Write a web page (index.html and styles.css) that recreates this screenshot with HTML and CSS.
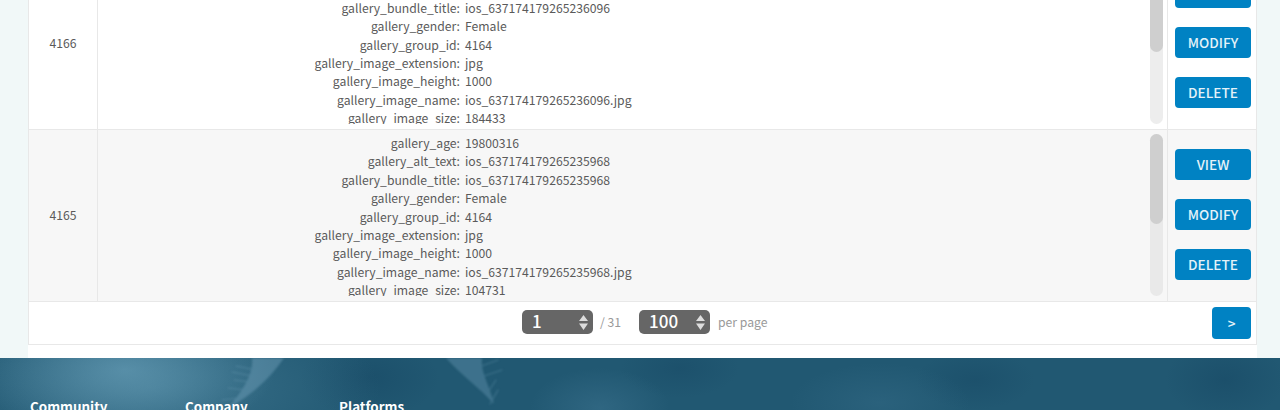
FILE: index.html
```html
<!DOCTYPE html>
<html lang="en">
<head>
  <meta charset="UTF-8" />
  <title>Gallery items</title>
  <link rel="stylesheet" href="styles.css">
</head>
<body>
  <main class="page">
    <div class="card">
      <div class="row">
        <div class="cell-id">4166</div>
        <div class="cell-data">
          <div class="scroller">
            <dl class="fields">
              <dt>gallery_age:</dt><dd>19800316</dd>
              <dt>gallery_alt_text:</dt><dd>ios_637174179265236096</dd>
              <dt>gallery_bundle_title:</dt><dd>ios_637174179265236096</dd>
              <dt>gallery_gender:</dt><dd>Female</dd>
              <dt>gallery_group_id:</dt><dd>4164</dd>
              <dt>gallery_image_extension:</dt><dd>jpg</dd>
              <dt>gallery_image_height:</dt><dd>1000</dd>
              <dt>gallery_image_name:</dt><dd>ios_637174179265236096.jpg</dd>
              <dt>gallery_image_size:</dt><dd>184433</dd>
            </dl>
          </div>
          <div class="track"><div class="thumb"></div></div>
        </div>
        <div class="cell-actions">
          <a class="btn">VIEW</a>
          <a class="btn">MODIFY</a>
          <a class="btn">DELETE</a>
        </div>
      </div>

      <div class="row row-alt">
        <div class="cell-id">4165</div>
        <div class="cell-data">
          <div class="scroller">
            <dl class="fields">
              <dt>gallery_age:</dt><dd>19800316</dd>
              <dt>gallery_alt_text:</dt><dd>ios_637174179265235968</dd>
              <dt>gallery_bundle_title:</dt><dd>ios_637174179265235968</dd>
              <dt>gallery_gender:</dt><dd>Female</dd>
              <dt>gallery_group_id:</dt><dd>4164</dd>
              <dt>gallery_image_extension:</dt><dd>jpg</dd>
              <dt>gallery_image_height:</dt><dd>1000</dd>
              <dt>gallery_image_name:</dt><dd>ios_637174179265235968.jpg</dd>
              <dt>gallery_image_size:</dt><dd>104731</dd>
            </dl>
          </div>
          <div class="track"><div class="thumb"></div></div>
        </div>
        <div class="cell-actions">
          <a class="btn">VIEW</a>
          <a class="btn">MODIFY</a>
          <a class="btn">DELETE</a>
        </div>
      </div>

      <div class="pager">
        <div class="pager-center">
          <div class="stepper">
            <span>1</span>
            <svg class="stepper-arrows" width="9" height="15" viewBox="0 0 9 15"><path d="M4.500 0 9 6H0zM4.500 15 0 8.500H9z" fill="#ddd"/></svg>
          </div>
          <span class="pager-note note-total">/ 31</span>
          <div class="stepper">
            <span>100</span>
            <svg class="stepper-arrows" width="9" height="15" viewBox="0 0 9 15"><path d="M4.500 0 9 6H0zM4.500 15 0 8.500H9z" fill="#ddd"/></svg>
          </div>
          <span class="pager-note">per page</span>
        </div>
        <a class="btn btn-next">&gt;</a>
      </div>
    </div>
  </main>

  <footer class="footer">
    <svg class="feathers" width="1280" height="52" viewBox="0 0 1280 52" fill="none">
      <g fill="#6a9ab3" stroke="#6a9ab3" stroke-linecap="round" opacity="0.5">
        <path d="M252 0H284C274 14 258 34 228 50 242 34 254 16 252 0z" stroke="none"/>
        <path d="M256 12 236 8M252 18 232 14M250 24 234 22M246 32 228 30M240 40 222 42" stroke-width="1.200"/>
      </g>
      <g fill="#6a9ab3" stroke="#6a9ab3" stroke-linecap="round" opacity="0.4">
        <path d="M446 0H482C480 14 490 28 494 46 480 30 462 18 446 0z" stroke="none"/>
        <path d="M476 10 498 2M484 18 502 12M488 34 496 22M490 46 498 32" stroke-width="1.200"/>
      </g>
    </svg>
    <div class="footer-cols">
      <h4 class="col-first">Community</h4>
      <h4>Company</h4>
      <h4>Platforms</h4>
    </div>
  </footer>
</body>
</html>
```

FILE: styles.css
```css
html, body {
  margin: 0;
  padding: 0;
  height: 410px;
  overflow: hidden;
}

body {
  font-family: "Noto Sans CJK KR", "Open Sans", sans-serif;
  font-size: 12.2px;
  color: #5a5a5a;
  background: #f1f8f8;
}

.page {
  margin: 0 23px 0 28px;
  height: 358px;
  background: #fff;
  overflow: hidden;
}

.card {
  margin-top: -42px;
  border: 1px solid #e8e8e8;
  border-top: 0;
  background: #fff;
}

.row {
  display: flex;
  height: 171px;
  border-bottom: 1px solid #e8e8e8;
}

.row-alt {
  background: #f7f7f7;
}

.cell-id {
  width: 68px;
  flex: none;
  display: flex;
  align-items: center;
  justify-content: center;
  padding-bottom: 1px;
  border-right: 1px solid #e8e8e8;
}

.cell-data {
  flex: 1;
  display: flex;
  padding: 4px 4px 5px 0;
  min-width: 0;
}

.scroller {
  flex: 1;
  overflow: hidden;
}

.fields {
  display: grid;
  grid-template-columns: 362px 1fr;
  grid-auto-rows: 18.4px;
  column-gap: 5px;
  margin: 0;
  line-height: 18.4px;
}

.fields dt {
  text-align: right;
}

.fields dd {
  margin: 0;
}

.track {
  width: 13px;
  flex: none;
  background: #ededed;
  border-radius: 7px;
}

.row-alt .track {
  background: #e9e9e9;
}

.thumb {
  height: 90px;
  background: #cfcfcf;
  border-radius: 7px;
}

.cell-actions {
  width: 89px;
  flex: none;
  display: flex;
  flex-direction: column;
  gap: 19px;
  align-items: flex-end;
  justify-content: center;
  padding: 0 5px 2px 0;
  box-sizing: border-box;
  border-left: 1px solid #e8e8e8;
}

.btn {
  width: 76px;
  height: 31px;
  padding-bottom: 1px;
  box-sizing: border-box;
  display: flex;
  align-items: center;
  justify-content: center;
  background: #0082c3;
  color: #e4f2f9;
  font-weight: 500;
  font-size: 13.6px;
  border-radius: 4px;
}

.pager {
  height: 42px;
  display: flex;
  align-items: center;
  position: relative;
}

.pager-center {
  position: absolute;
  left: 493px;
  top: 8px;
  display: flex;
  align-items: center;
}

.stepper {
  width: 71px;
  height: 24px;
  box-sizing: border-box;
  padding: 0 5px 0 10px;
  display: flex;
  align-items: center;
  justify-content: space-between;
  background: #666;
  color: #fff;
  font-size: 17px;
  font-weight: 500;
  line-height: 22px;
  border-radius: 5px;
}

.stepper span {
  margin-top: -2px;
}

.pager-note {
  color: #999;
  font-size: 12.2px;
  margin-left: 8px;
}

.note-total {
  margin-left: 7px;
  margin-right: 18px;
}

.btn-next {
  width: 39px;
  height: 32px;
  margin-left: auto;
  margin-right: 5px;
}

.footer {
  position: relative;
  height: 52px;
  overflow: hidden;
  background:
    radial-gradient(ellipse 150px 70px at 125px 12px, rgba(110, 165, 190, 0.6), rgba(110, 165, 190, 0) 100%),
    radial-gradient(ellipse 230px 90px at 150px 30px, rgba(80, 135, 160, 0.55), rgba(80, 135, 160, 0) 100%),
    radial-gradient(ellipse 70px 40px at 600px 50px, rgba(80, 135, 165, 0.3), rgba(80, 135, 165, 0) 100%),
    radial-gradient(ellipse 90px 40px at 880px 45px, rgba(80, 135, 165, 0.2), rgba(80, 135, 165, 0) 100%),
    radial-gradient(ellipse 60px 30px at 680px 10px, rgba(15, 60, 90, 0.25), rgba(15, 60, 90, 0) 100%),
    radial-gradient(ellipse 60px 30px at 975px 22px, rgba(15, 60, 90, 0.25), rgba(15, 60, 90, 0) 100%),
    radial-gradient(ellipse 60px 40px at 1225px 22px, rgba(15, 60, 90, 0.3), rgba(15, 60, 90, 0) 100%),
    radial-gradient(ellipse 70px 40px at 370px 20px, rgba(15, 60, 90, 0.3), rgba(15, 60, 90, 0) 100%),
    #215872;
}

.feathers {
  position: absolute;
  left: 0;
  top: 0;
  filter: blur(0.8px);
}

.footer-cols {
  position: relative;
  display: flex;
  padding: 39px 0 0 30px;
}

.footer-cols h4 {
  width: 154px;
  margin: 0;
  color: #fff;
  font-size: 13.4px;
  font-weight: 700;
  line-height: 18px;
}

.footer-cols .col-first {
  width: 155px;
}
```
